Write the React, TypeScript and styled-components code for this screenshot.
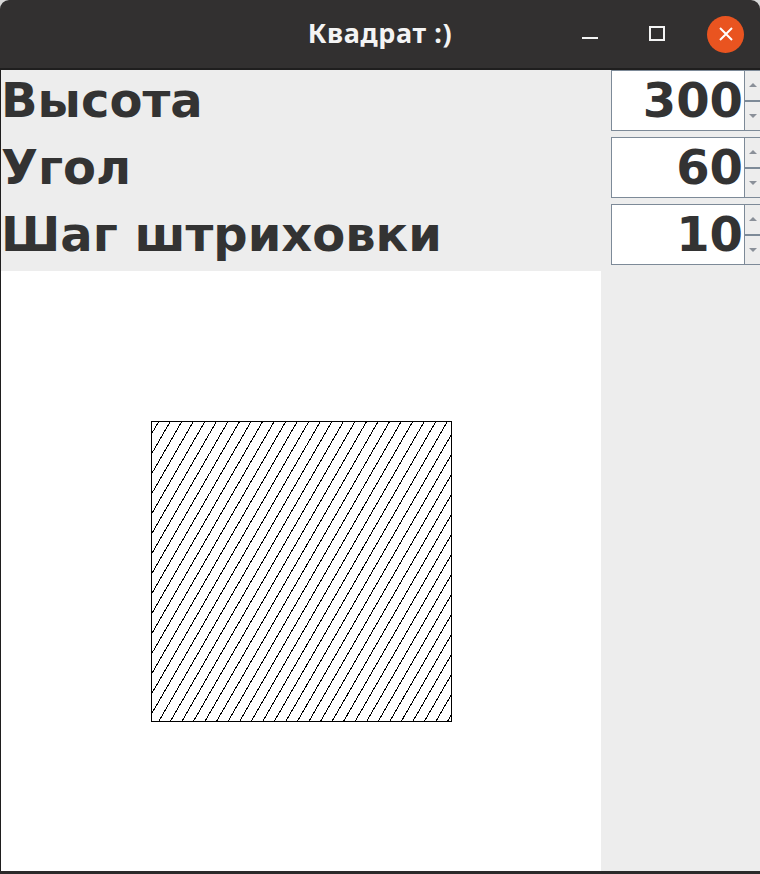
import React from "react";
import styled, { createGlobalStyle } from "styled-components";

const Global = createGlobalStyle`
  html, body { margin: 0; padding: 0; background: #d9d9d9; }
  #root { width: 760px; height: 874px; }
`;

const Window = styled.div`
  width: 760px;
  height: 874px;
  display: flex;
  flex-direction: column;
  overflow: hidden;
  background: #ededed;
  border-radius: 9px 9px 0 0;
`;

const TitleBar = styled.div`
  height: 68px;
  flex: none;
  background: #323030;
  border-bottom: 2px solid #1f1e1e;
  display: grid;
  grid-template-columns: 1fr auto 1fr;
  align-items: center;
`;

const Title = styled.div`
  grid-column: 2;
  color: #f4f4f4;
  font-family: "Noto Sans", "Open Sans", sans-serif;
  font-weight: 700;
  font-size: 27px;
  letter-spacing: 0.6px;
  padding-bottom: 3px;
`;

const Controls = styled.div`
  grid-column: 3;
  justify-self: end;
  display: flex;
  align-items: center;
  padding-right: 16px;
`;

const CtrlButton = styled.div<{ $w: number }>`
  width: ${(p) => p.$w}px;
  height: 40px;
  display: flex;
  align-items: center;
  justify-content: center;
`;

const CloseCircle = styled.div`
  width: 37px;
  height: 37px;
  border-radius: 50%;
  background: #e95420;
  display: flex;
  align-items: center;
  justify-content: center;
`;

const Body = styled.div`
  flex: 1;
  display: flex;
  flex-direction: column;
  border-left: 1px solid #1f1e1e;
  min-height: 0;
`;

const Form = styled.div`
  display: grid;
  grid-template-columns: 1fr 149px;
  grid-auto-rows: 61px;
  row-gap: 6px;
  padding-bottom: 6px;
`;

const Label = styled.div`
  font-family: "DejaVu Sans", sans-serif;
  font-weight: 700;
  font-size: 48px;
  color: #333333;
  line-height: 61px;
  white-space: nowrap;
`;

const Spinner = styled.div`
  display: flex;
  height: 61px;
`;

const Field = styled.div`
  width: 134px;
  box-sizing: border-box;
  border: 1px solid #7d8a98;
  background: #ffffff;
  font-family: "DejaVu Sans", sans-serif;
  font-weight: 700;
  font-size: 48px;
  color: #333333;
  text-align: right;
  line-height: 59px;
  padding-right: 1px;
`;

const Arrows = styled.div`
  flex: 1;
  display: flex;
  flex-direction: column;
  box-sizing: border-box;
  border-top: 1px solid #7d8a98;
  border-bottom: 1px solid #7d8a98;
  background: #ededed;
`;

const Arrow = styled.div<{ $down?: boolean }>`
  flex: 1;
  display: flex;
  align-items: center;
  justify-content: center;
  border-top: ${(p) => (p.$down ? "2px solid #7d8a98" : "none")};
  &::before {
    content: "";
    width: 0;
    height: 0;
    border-left: 4px solid transparent;
    border-right: 4px solid transparent;
    ${(p) =>
      p.$down
        ? "border-top: 4px solid #8a9099;"
        : "border-bottom: 4px solid #8a9099;"}
  }
`;

const Lower = styled.div`
  flex: 1;
  display: flex;
  min-height: 0;
`;

const Canvas = styled.div`
  width: 600px;
  height: 600px;
  background: #ffffff;
  flex: none;
`;

const BottomEdge = styled.div`
  height: 3px;
  flex: none;
  background: #2b2a2a;
`;

const rows = [
  { label: "Высота", value: "300" },
  { label: "Угол", value: "60" },
  { label: "Шаг штриховки", value: "10" },
];

function Hatch() {
  const size = 300;
  const angle = (60 * Math.PI) / 180;
  const step = 10;
  const dx = step / Math.sin(angle);
  const shift = size / Math.tan(angle);
  const offset = 8;
  const lines: React.ReactNode[] = [];
  for (let c = offset - dx * 3; c < size + shift + dx; c += dx) {
    lines.push(
      <line key={c} x1={150 + c} y1={150} x2={150 + c - shift} y2={450} />
    );
  }
  return (
    <svg width={600} height={600} viewBox="0 0 600 600" style={{ display: "block" }}>
      <defs>
        <clipPath id="sq">
          <rect x={150} y={150} width={300} height={300} />
        </clipPath>
      </defs>
      <g clipPath="url(#sq)" stroke="#000" strokeWidth={1} shapeRendering="crispEdges">
        {lines}
      </g>
      <rect
        x={150.5}
        y={150.5}
        width={300}
        height={300}
        fill="none"
        stroke="#000"
        strokeWidth={1}
        shapeRendering="crispEdges"
      />
    </svg>
  );
}

export default function App() {
  return (
    <>
      <Global />
      <Window>
        <TitleBar>
          <Title>Квадрат :)</Title>
          <Controls>
            <CtrlButton $w={34}>
              <svg width="16" height="16" viewBox="0 0 16 16">
                <rect x="0" y="11" width="16" height="2" fill="#f4f4f4" />
              </svg>
            </CtrlButton>
            <CtrlButton $w={100}>
              <svg width="16" height="16" viewBox="0 0 16 16">
                <rect x="1" y="1" width="14" height="13" fill="none" stroke="#f4f4f4" strokeWidth="2" />
              </svg>
            </CtrlButton>
            <CloseCircle>
              <svg width="14" height="14" viewBox="0 0 14 14">
                <path d="M1 1 L13 13 M13 1 L1 13" stroke="#ffffff" strokeWidth="2" />
              </svg>
            </CloseCircle>
          </Controls>
        </TitleBar>
        <Body>
          <Form>
            {rows.map((r) => (
              <React.Fragment key={r.label}>
                <Label>{r.label}</Label>
                <Spinner>
                  <Field>{r.value}</Field>
                  <Arrows>
                    <Arrow />
                    <Arrow $down />
                  </Arrows>
                </Spinner>
              </React.Fragment>
            ))}
          </Form>
          <Lower>
            <Canvas>
              <Hatch />
            </Canvas>
          </Lower>
        </Body>
        <BottomEdge />
      </Window>
    </>
  );
}
